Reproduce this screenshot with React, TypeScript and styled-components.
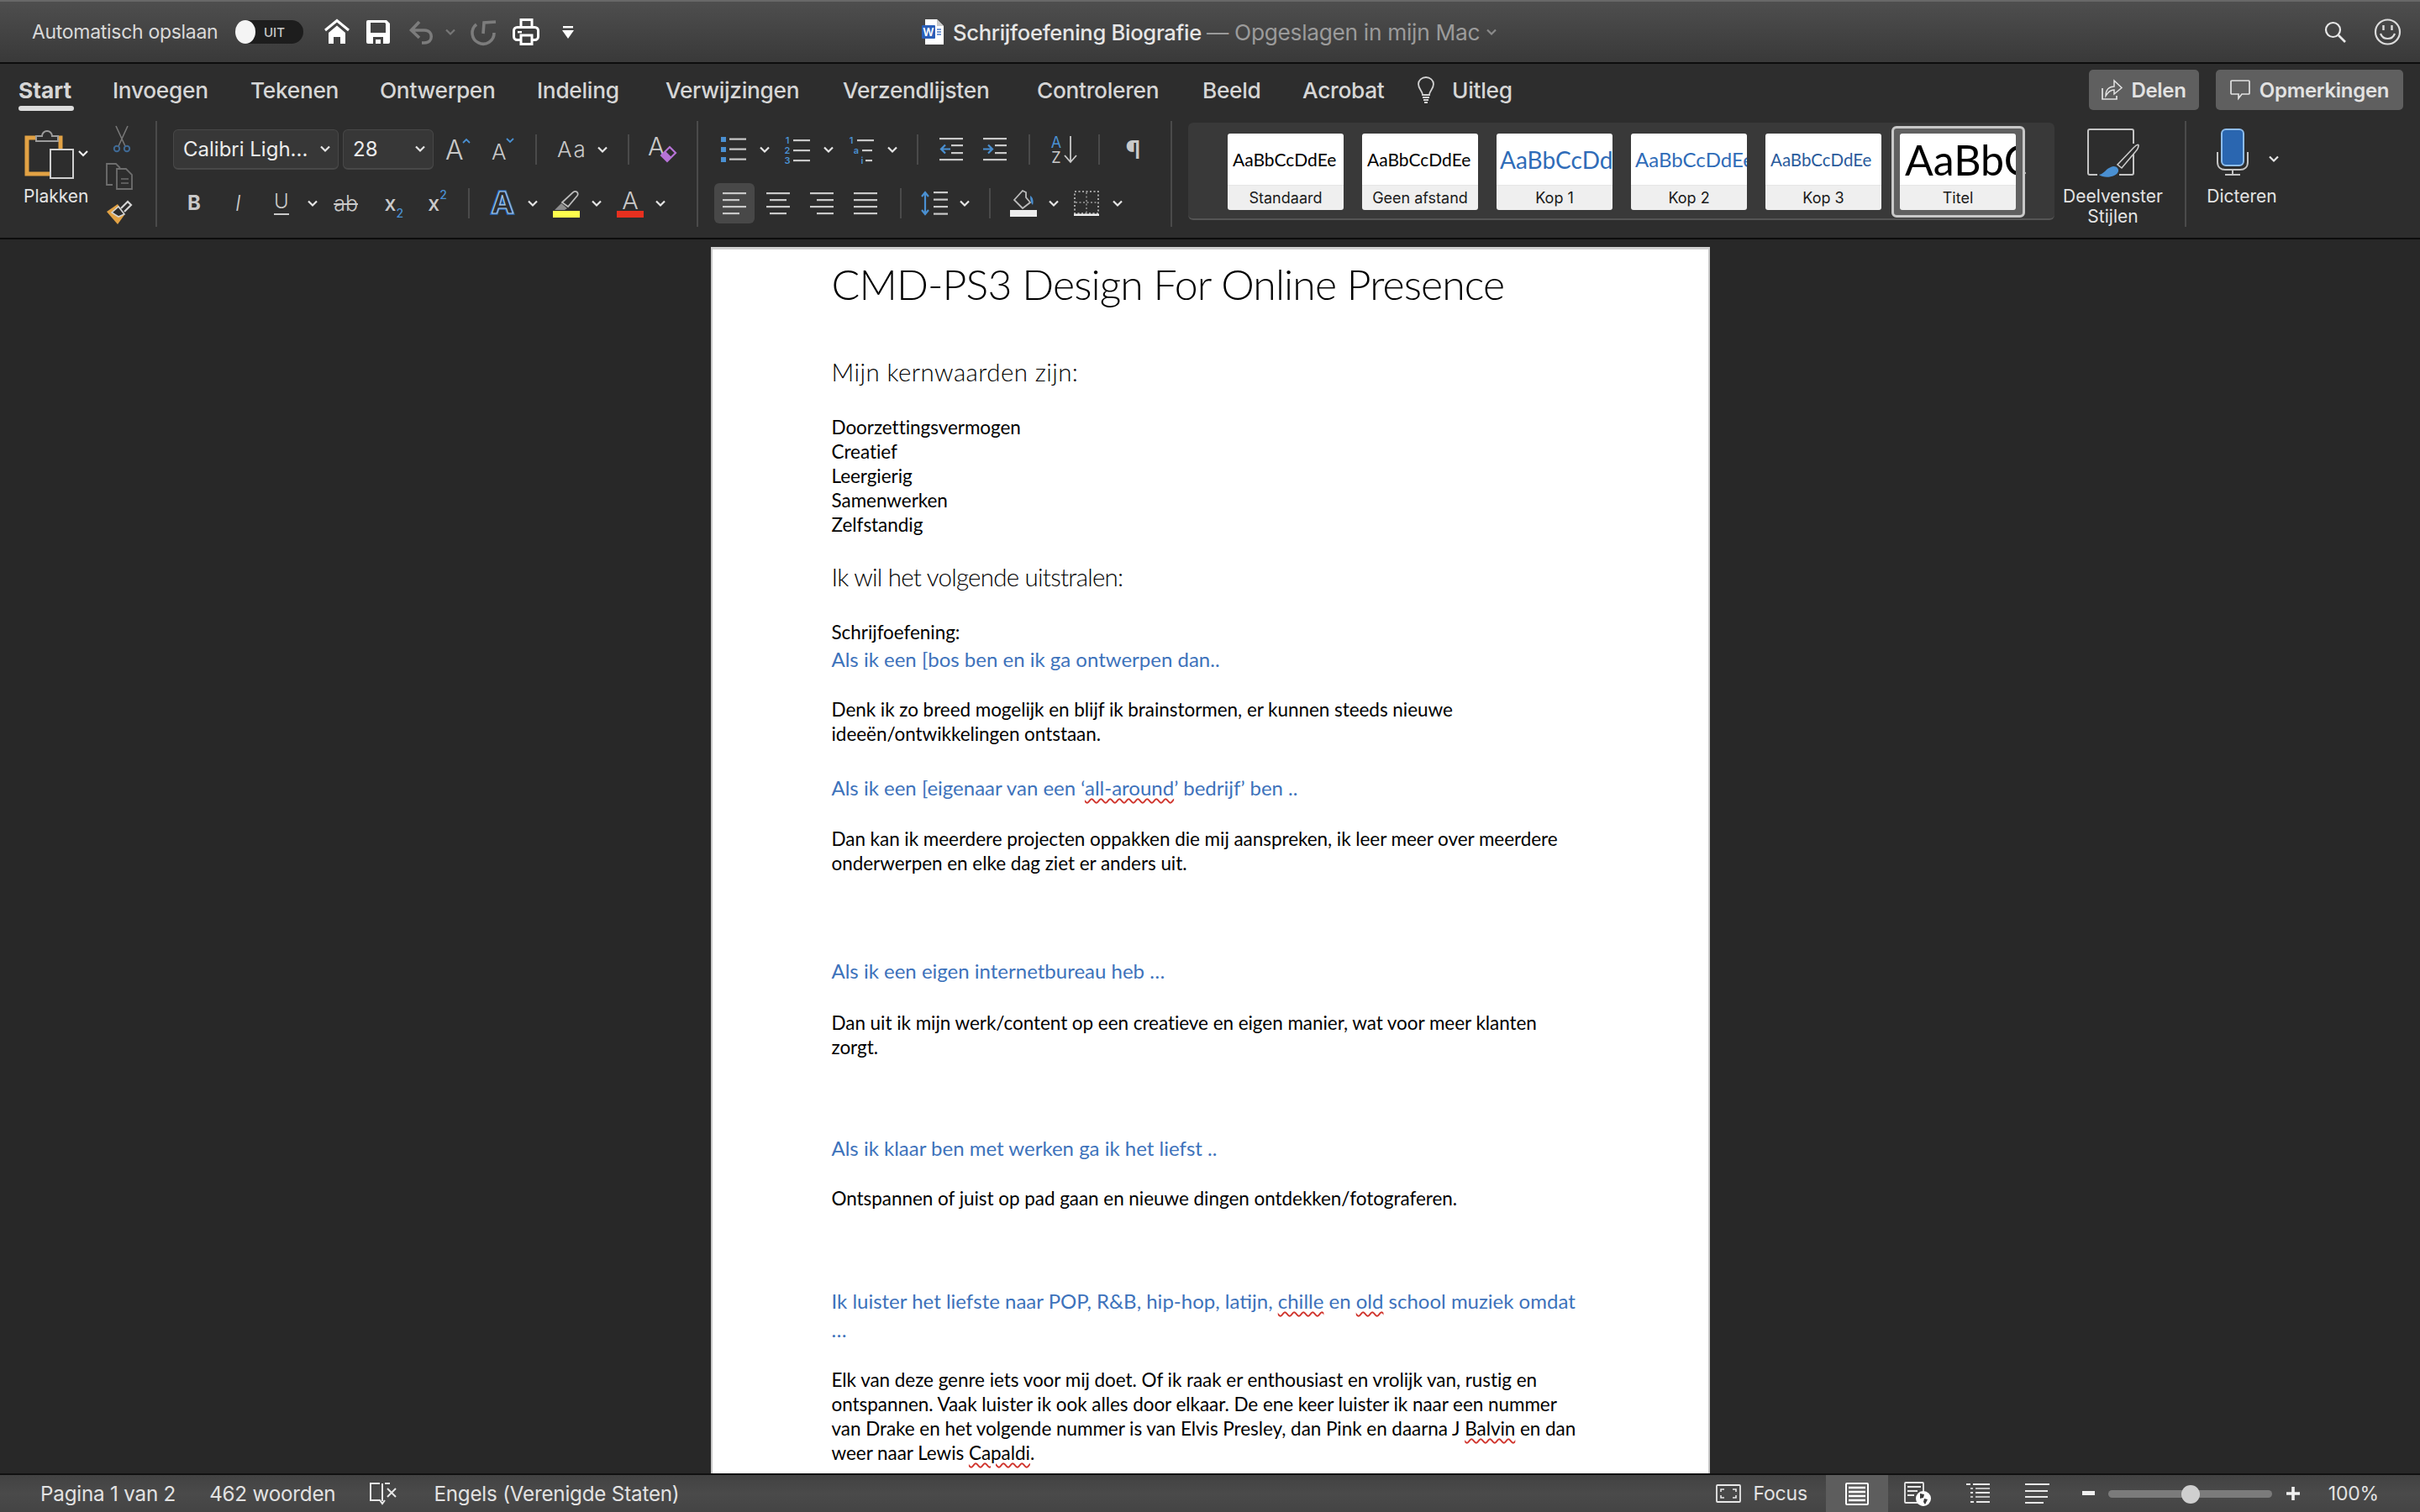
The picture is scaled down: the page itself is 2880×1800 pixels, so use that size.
import React from 'react';
import styled, { createGlobalStyle } from 'styled-components';

const GlobalStyle = createGlobalStyle`
  html, body { margin: 0; padding: 0; background: #282828; }
  body { font-family: Inter, "Noto Sans", sans-serif; }
  * { box-sizing: border-box; }
  svg { overflow: visible; }
`;

const ICON = '#c9c9c9';
const BLUE = '#4a90d2';

const Window = styled.div`
  width: 2880px;
  height: 1800px;
  display: flex;
  flex-direction: column;
  overflow: hidden;
`;

/* title bar */
const TitleBar = styled.div`
  flex: 0 0 76px;
  display: flex;
  align-items: center;
  background: linear-gradient(#4e4e4e, #393939);
  border-top: 2px solid #686868;
  border-bottom: 2px solid #0d0d0d;
`;
const Slot = styled.span<{ $l?: number; $w?: number }>`
  flex: 0 0 auto;
  display: inline-flex;
  align-items: center;
  justify-content: center;
  margin-left: ${(p) => p.$l ?? 0}px;
  ${(p) => (p.$w ? `width: ${p.$w}px;` : '')}
`;
const AutoSave = styled.span`
  margin-left: 38px;
  font-size: 23px;
  letter-spacing: -0.3px;
  color: #d9d9d9;
  white-space: nowrap;
  width: 222px;
`;
const Toggle = styled.span`
  margin-left: 20px;
  width: 81px;
  height: 28px;
  border-radius: 14px;
  background: #1d1d1d;
  display: flex;
  align-items: center;
`;
const Knob = styled.span`
  width: 24px;
  height: 28px;
  border-radius: 50%;
  background: #f4f4f4;
`;
const ToggleText = styled.span`
  margin-left: 10px;
  font-size: 15px;
  font-weight: 500;
  color: #c8c8c8;
`;
const DocName = styled.span`
  margin-left: 11px;
  font-size: 25.6px;
  font-weight: 500;
  letter-spacing: -0.3px;
  color: #e6e6e6;
  white-space: nowrap;
`;
const DocPlace = styled.span`
  margin-left: 6px;
  font-size: 26.3px;
  letter-spacing: -0.3px;
  color: #9b9b9b;
  white-space: nowrap;
`;
const TitleRight = styled.div`
  margin-left: auto;
  margin-right: 22px;
  display: flex;
  align-items: center;
  gap: 33px;
`;

/* ribbon */
const Ribbon = styled.div`
  flex: 0 0 209px;
  background: #2d2d2d;
  border-bottom: 2px solid #0d0d0d;
  display: flex;
  flex-direction: column;
`;
const TabRow = styled.div`
  flex: 0 0 68px;
  display: flex;
  align-items: center;
  padding-left: 22px;
  padding-bottom: 6px;
`;
const Tab = styled.span<{ $w: number; $l?: number; $active?: boolean }>`
  position: relative;
  flex: 0 0 ${(p) => p.$w}px;
  margin-left: ${(p) => p.$l ?? 0}px;
  font-size: 26.3px;
  font-weight: ${(p) => (p.$active ? 700 : 500)};
  letter-spacing: -0.3px;
  color: #d6d6d6;
  white-space: nowrap;
  ${(p) =>
    p.$active &&
    `letter-spacing: 0;
    &::after {
      content: '';
      position: absolute;
      left: 0;
      top: 34px;
      width: 66px;
      height: 6px;
      border-radius: 3px;
      background: #dcdcdc;
    }`}
`;
const TabButtons = styled.div`
  margin-left: auto;
  margin-right: 20px;
  display: flex;
  gap: 20px;
`;
const TabButton = styled.span<{ $w: number }>`
  width: ${(p) => p.$w}px;
  height: 48px;
  border-radius: 5px;
  background: #5f5f5f;
  display: flex;
  align-items: center;
  justify-content: center;
  gap: 11px;
  font-size: 24px;
  font-weight: 600;
  letter-spacing: -0.3px;
  color: #e2e2e2;
`;
const Tools = styled.div`
  flex: 0 0 124px;
  display: flex;
`;
const Divider = styled.span<{ $l?: number }>`
  flex: 0 0 2px;
  margin-left: ${(p) => p.$l ?? 0}px;
  background: #4a4a4a;
`;
const ClipGroup = styled.div`
  flex: 0 0 185px;
  display: flex;
  padding-left: 26px;
`;
const PasteColumn = styled.div`
  flex: 0 0 86px;
  display: flex;
  flex-direction: column;
  align-items: flex-start;
  padding-top: 9px;
`;
const PasteLabel = styled.span`
  margin-top: 6px;
  margin-left: 2px;
  font-size: 21px;
  color: #e4e4e4;
`;
const SmallColumn = styled.div`
  margin-left: 14px;
  display: flex;
  flex-direction: column;
  padding-top: 6px;
  gap: 12px;
`;
const ToolGroup = styled.div<{ $w: number }>`
  flex: 0 0 ${(p) => p.$w}px;
  display: flex;
  flex-direction: column;
  padding-top: 10px;
  gap: 16px;
`;
const ToolRow = styled.div`
  height: 48px;
  display: flex;
  align-items: center;
`;
const Select = styled.span<{ $l: number; $w: number }>`
  margin-left: ${(p) => p.$l}px;
  width: ${(p) => p.$w}px;
  height: 48px;
  border: 1px solid #484848;
  border-bottom-width: 2px;
  border-radius: 6px;
  background: #373737;
  display: flex;
  align-items: center;
  justify-content: space-between;
  padding: 0 9px 0 11px;
  font-size: 24px;
  color: #ececec;
  white-space: nowrap;
`;
const RowSep = styled.span<{ $l: number }>`
  margin-left: ${(p) => p.$l}px;
  flex: 0 0 2px;
  height: 36px;
  background: #4a4a4a;
`;
const Glyph = styled.span<{ $l: number; $w: number; $size: number; $weight?: number; $italic?: boolean; $line?: boolean; $under?: boolean; $track?: number }>`
  flex: 0 0 ${(p) => p.$w}px;
  margin-left: ${(p) => p.$l}px;
  text-align: center;
  font-size: ${(p) => p.$size}px;
  font-weight: ${(p) => p.$weight ?? 400};
  font-style: ${(p) => (p.$italic ? 'italic' : 'normal')};
  letter-spacing: ${(p) => p.$track ?? 0}px;
  ${(p) => (p.$line ? 'text-decoration: line-through; text-decoration-thickness: 2px;' : '')}
  ${(p) => (p.$under ? `border-bottom: 2px solid ${ICON}; padding-bottom: 2px;` : '')}
  color: ${ICON};
  line-height: 1;
  white-space: nowrap;
`;
const Sup = styled.sup`
  font-size: 14px;
  color: ${BLUE};
  vertical-align: baseline;
  position: relative;
  top: -14px;
`;
const Sub = styled.sub`
  font-size: 14px;
  color: ${BLUE};
  vertical-align: baseline;
  position: relative;
  top: 8px;
`;
const SelectedTool = styled.span<{ $l: number }>`
  margin-left: ${(p) => p.$l}px;
  width: 48px;
  height: 48px;
  border-radius: 6px;
  background: #484848;
  display: flex;
  align-items: center;
  justify-content: center;
`;

/* style gallery */
const Gallery = styled.div`
  flex: 0 0 1031px;
  margin: 2px 0 6px 19px;
  height: 116px;
  border-radius: 6px;
  background: #393939;
  border-bottom: 2px solid #555;
  display: flex;
  align-items: flex-start;
  padding: 13px 0 0 47px;
  gap: 22px;
`;
const StyleCard = styled.div<{ $selected?: boolean }>`
  position: relative;
  flex: 0 0 138px;
  width: 138px;
  min-width: 0;
  height: 91px;
  border-radius: 3px;
  display: flex;
  flex-direction: column;
  ${(p) =>
    p.$selected &&
    `&::before {
      content: '';
      position: absolute;
      inset: -9px -11px -9px -10px;
      border: 3px solid #c8c8c8;
      border-radius: 6px;
      background: #606060;
      z-index: 0;
    }`}
`;
const Sample = styled.div<{ $size: number; $color: string; $pad: number }>`
  position: relative;
  z-index: 1;
  height: 61px;
  padding-left: ${(p) => p.$pad}px;
  border-radius: 3px 3px 0 0;
  background: #fff;
  overflow: hidden;
  display: flex;
  align-items: center;
  font-family: Lato, sans-serif;
  font-size: ${(p) => p.$size}px;
  color: ${(p) => p.$color};
  white-space: nowrap;
`;
const SampleLabel = styled.div`
  position: relative;
  z-index: 1;
  height: 30px;
  background: #efefef;
  border-radius: 0 0 3px 3px;
  border-top: 1px solid #e6e6e6;
  text-align: center;
  font-size: 18px;
  line-height: 30px;
  color: #1a1a1a;
`;
const GalleryArrow = styled.span`
  margin: 38px 0 0 -17px;
`;
const PaneColumn = styled.div`
  flex: 0 0 139px;
  display: flex;
  flex-direction: column;
  align-items: center;
  padding-top: 9px;
`;
const DictateColumn = styled.div`
  flex: 0 0 132px;
  display: flex;
  flex-direction: column;
  align-items: center;
  padding-top: 9px;
`;
const BigLabel = styled.span`
  margin-top: 8px;
  text-align: center;
  font-size: 21px;
  line-height: 24px;
  color: #e4e4e4;
`;
const DictateIcon = styled.div`
  height: 61px;
  display: flex;
  align-items: flex-start;
  gap: 24px;
  padding-left: 14px;
`;
const DictateChevron = styled.span`
  margin-top: 25px;
`;

/* document */
const Canvas = styled.div`
  flex: 1;
  background: #282828;
  display: flex;
  justify-content: center;
  overflow: hidden;
  padding-top: 9px;
`;
const Page = styled.div`
  width: 1189px;
  height: 1600px;
  background: #fff;
  border-top: 3px solid #d0d0d0;
  border-left: 2px solid #c8c8c8;
  border-right: 2px solid #c8c8c8;
  padding: 9px 0 0 142px;
  font-family: Lato, "Noto Sans", sans-serif;
  color: #000;
`;
const DocTitle = styled.div`
  height: 64px;
  line-height: 64px;
  font-size: 50px;
  font-weight: 300;
  letter-spacing: -0.9px;
  white-space: nowrap;
`;
const Heading = styled.div<{ $mt: number; $tight?: boolean }>`
  margin-top: ${(p) => p.$mt}px;
  height: 38px;
  line-height: 38px;
  font-size: 29.5px;
  font-weight: 300;
  letter-spacing: ${(p) => (p.$tight ? '-0.75px' : '0.4px')};
  white-space: nowrap;
`;
const Body = styled.div<{ $mt?: number }>`
  margin-top: ${(p) => p.$mt ?? 0}px;
  line-height: 29px;
  font-size: 22.5px;
  letter-spacing: -0.05px;
  white-space: nowrap;
`;
const Prompt = styled.div<{ $mt?: number }>`
  margin-top: ${(p) => p.$mt ?? 0}px;
  height: 34px;
  line-height: 34px;
  font-size: 24px;
  color: #3d72bb;
  white-space: nowrap;
`;
const Misspelled = styled.span`
  text-decoration: underline wavy #d0342c;
  text-decoration-thickness: 1.5px;
  text-underline-offset: 3px;
`;

/* status bar */
const StatusBar = styled.div`
  flex: 0 0 46px;
  display: flex;
  align-items: center;
  background: linear-gradient(#424242, #4a4a4a 50%, #444);
  border-top: 2px solid #111;
  font-size: 24.2px;
  letter-spacing: -0.2px;
  color: #e2e2e2;
`;
const StatusText = styled.span<{ $l: number }>`
  margin-left: ${(p) => p.$l}px;
  white-space: nowrap;
`;
const StatusRight = styled.div`
  margin-left: auto;
  height: 100%;
  display: flex;
  align-items: center;
  font-size: 23px;
`;
const ViewButton = styled.span<{ $l: number; $on?: boolean }>`
  margin-left: ${(p) => p.$l}px;
  height: 100%;
  padding: 0 ${(p) => (p.$on ? 23 : 0)}px;
  background: ${(p) => (p.$on ? '#5d5d5d' : 'transparent')};
  display: flex;
  align-items: center;
`;
const ZoomTrack = styled.span`
  position: relative;
  margin-left: 16px;
  width: 195px;
  height: 9px;
  border-radius: 5px;
  background: #7b7b7b;
`;
const ZoomKnob = styled.span`
  position: absolute;
  left: 87px;
  top: -6px;
  width: 22px;
  height: 22px;
  border-radius: 50%;
  background: #cfcfcf;
`;

/* icons */
const Chev = ({ c = '#e6e6e6' }: { c?: string }) => (
  <svg width="12" height="9" viewBox="0 0 12 9"><path d="M1 1.5l5 5 5-5" fill="none" stroke={c} strokeWidth="2.2" /></svg>
);
const Lines = ({ rows, c = ICON, w = 28 }: { rows: [number, number][]; c?: string; w?: number }) => (
  <svg width={w} height="26" viewBox={`0 0 ${w} 26`}>
    {rows.map(([x, l], i) => (
      <rect key={i} x={x} y={i * 8} width={l} height="2.2" fill={c} />
    ))}
  </svg>
);
const Home = () => (
  <svg width="32" height="30" viewBox="0 0 32 30">
    <path d="M2 13L16 1.5 30 13" fill="none" stroke="#fff" strokeWidth="3" />
    <path d="M6 16L16 7.5 26 16v13h-6v-8h-8v8H6z" fill="#fff" />
  </svg>
);
const Save = () => (
  <svg width="28" height="28" viewBox="0 0 28 28">
    <path d="M2 0h22l4 4v22a2 2 0 01-2 2H2a2 2 0 01-2-2V2a2 2 0 012-2z" fill="#fff" />
    <path d="M5 3h17l1 1v11H5z" fill="#434343" />
    <path d="M8 28v-8h12v8h-3v-5h-6v5z" fill="#434343" />
  </svg>
);
const Undo = () => (
  <svg width="30" height="28" viewBox="0 0 30 28">
    <path d="M12 2L2.5 12 12 21M3 12h15c11 0 11 15 0 15h-3" fill="none" stroke="#7c7c7c" strokeWidth="3.6" />
  </svg>
);
const Redo = () => (
  <svg width="30" height="30" viewBox="0 0 30 30">
    <path d="M7 6a13 13 0 1 0 21 10" fill="none" stroke="#7c7c7c" strokeWidth="3.6" />
    <path d="M30 3L16 4l-1 13" fill="none" stroke="#7c7c7c" strokeWidth="3.6" />
  </svg>
);
const Printer = () => (
  <svg width="32" height="32" viewBox="0 0 32 32">
    <rect x="10" y="1.5" width="13" height="10" fill="none" stroke="#fff" strokeWidth="3" />
    <rect x="1.5" y="10.5" width="29" height="15" rx="4" fill="#3e3e3e" stroke="#fff" strokeWidth="3" />
    <rect x="6" y="15" width="5" height="2.4" fill="#fff" />
    <rect x="10" y="20" width="13" height="10.5" fill="#3e3e3e" stroke="#fff" strokeWidth="3" />
  </svg>
);
const QuickMenu = () => (
  <svg width="14" height="15" viewBox="0 0 14 15">
    <rect x="1" y="0" width="12" height="2.4" fill="#fff" />
    <path d="M0 5h14l-7 10z" fill="#fff" />
  </svg>
);
const WordDoc = () => (
  <svg width="26" height="30" viewBox="0 0 26 30">
    <path d="M4 0h14l8 8v22H4z" fill="#fff" />
    <path d="M18 0v8h8z" fill="#c8c8c8" />
    <rect x="0" y="7" width="16" height="16" rx="1" fill="#2b5fb8" />
    <text x="8" y="20" textAnchor="middle" fontFamily="Inter" fontSize="13" fontWeight="600" fill="#fff">W</text>
    <path d="M18 12h5M18 15h5M18 18h5" stroke="#4a7ac8" strokeWidth="1.4" />
  </svg>
);
const Search = () => (
  <svg width="26" height="26" viewBox="0 0 26 26">
    <circle cx="10.5" cy="10.5" r="8.5" fill="none" stroke="#e8e8e8" strokeWidth="2.2" />
    <path d="M17 17l8 8" stroke="#e8e8e8" strokeWidth="2.6" />
  </svg>
);
const Smile = () => (
  <svg width="33" height="32" viewBox="0 0 33 32">
    <circle cx="16.5" cy="16" r="14.5" fill="none" stroke="#dcdcdc" strokeWidth="2.2" />
    <path d="M11.5 8v6M21.5 8v6" stroke="#dcdcdc" strokeWidth="2.4" />
    <path d="M8 18c3 8 14 8 17 0" fill="none" stroke="#dcdcdc" strokeWidth="2.2" />
  </svg>
);
const Bulb = () => (
  <svg width="22" height="33" viewBox="0 0 22 33">
    <path d="M7 22c0-5-5-7-5-13a9 8 0 0118 0c0 6-5 8-5 13z" fill="none" stroke="#d2d2d2" strokeWidth="1.8" />
    <path d="M7 25h8M8 28h6M9 31h4" stroke="#d2d2d2" strokeWidth="2" />
  </svg>
);
const Share = () => (
  <svg width="24" height="24" viewBox="0 0 24 24">
    <path d="M1 10v13h17v-4" fill="none" stroke="#e2e2e2" strokeWidth="1.7" />
    <path d="M5 19c0-7 4-11 10-11V1l9 8.500-9 7.500V12c-4 0-7 2-10 7z" fill="none" stroke="#e2e2e2" strokeWidth="1.5" />
  </svg>
);
const Comment = () => (
  <svg width="24" height="24" viewBox="0 0 24 24">
    <path d="M2 1h20a1 1 0 011 1v14a1 1 0 01-1 1h-8l-4 5v-5H2a1 1 0 01-1-1V2a1 1 0 011-1z" fill="none" stroke="#e2e2e2" strokeWidth="1.7" />
  </svg>
);
const Paste = () => (
  <svg width="80" height="62" viewBox="0 0 80 62">
    <path d="M22 11H6v43h28" fill="none" stroke="#e2a244" strokeWidth="5" />
    <path d="M38 11h8v14" fill="none" stroke="#e2a244" strokeWidth="5" />
    <path d="M17 15V9h7a6 6 0 0112 0h7v6z" fill="#2d2d2d" stroke="#9c9c9c" strokeWidth="2" />
    <rect x="34" y="25" width="27" height="34" fill="#2d2d2d" stroke="#cfcfcf" strokeWidth="2" />
    <path d="M68 27l5 5 5-5" fill="none" stroke="#eee" strokeWidth="2.2" />
  </svg>
);
const Scissors = () => (
  <svg width="20" height="32" viewBox="0 0 20 32">
    <path d="M3 0l11 24M17 0L6 24" stroke="#777" strokeWidth="1.6" />
    <circle cx="4" cy="27" r="3.2" fill="none" stroke="#3f6a96" strokeWidth="2" />
    <circle cx="16" cy="27" r="3.2" fill="none" stroke="#3f6a96" strokeWidth="2" />
  </svg>
);
const Copy = () => (
  <svg width="32" height="32" viewBox="0 0 32 32">
    <path d="M8 26H1V1h11l5 5" fill="none" stroke="#6e6e6e" strokeWidth="1.8" />
    <path d="M13 7h11l7 7v17H13z" fill="none" stroke="#6e6e6e" strokeWidth="1.8" />
    <path d="M18 19h9M18 24h9" stroke="#6e6e6e" strokeWidth="1.6" />
  </svg>
);
const Brush = () => (
  <svg width="32" height="30" viewBox="0 0 32 30">
    <path d="M1 14L14 5l8 13-8 11z" fill="#e2a244" />
    <path d="M7 15l8-7 7 9-7 3z" fill="#2d2d2d" stroke="#d4d4d4" strokeWidth="1.6" />
    <path d="M18 10l8-8 4 4-8 8" fill="none" stroke="#d4d4d4" strokeWidth="2.2" />
  </svg>
);
const GrowA = ({ up }: { up: boolean }) => (
  <svg width={up ? 30 : 27} height="30" viewBox={`0 0 ${up ? 30 : 27} 30`}>
    <text x="0" y="27" fontFamily="Inter" fontSize={up ? 32 : 26} fontWeight="300" fill={ICON}>A</text>
    <path d={up ? 'M21 7l4-4 4 4' : 'M18 2l4 4 4-4'} fill="none" stroke={BLUE} strokeWidth="1.8" />
  </svg>
);
const ClearFormat = () => (
  <svg width="32" height="32" viewBox="0 0 32 32">
    <text x="-1" y="23" fontFamily="Inter" fontSize="30" fontWeight="300" fill={ICON}>A</text>
    <path d="M25 13l7 7-10 10-7-7z" fill="#2d2d2d" stroke="#b673d6" strokeWidth="2.2" />
    <path d="M20 18l7 7-5 5-7-7z" fill="#b673d6" />
  </svg>
);
const OutlineA = () => (
  <svg width="32" height="30" viewBox="0 0 32 30">
    <text x="16" y="27" textAnchor="middle" fontFamily="Inter" fontSize="36" fontWeight="700" fill="#2d2d2d" stroke="#2a68b4" strokeWidth="3.5">A</text>
    <text x="16" y="27" textAnchor="middle" fontFamily="Inter" fontSize="36" fontWeight="700" fill="#2d2d2d" stroke="#a3c9ee" strokeWidth="1.2">A</text>
  </svg>
);
const Highlighter = () => (
  <svg width="32" height="33" viewBox="0 0 32 33">
    <path d="M11 15L24 3a3 3 0 015 4L18 20z" fill="none" stroke="#bcbcbc" strokeWidth="1.8" />
    <path d="M2 24l8-8 7 6-3 2z" fill="#8c8c8c" />
    <rect x="0" y="25" width="32" height="8" fill="#ffff4d" />
  </svg>
);
const FontColor = () => (
  <svg width="32" height="33" viewBox="0 0 32 33">
    <text x="16" y="23" textAnchor="middle" fontFamily="Inter" fontSize="29" fontWeight="300" fill={ICON}>A</text>
    <rect x="0" y="25" width="32" height="8" fill="#e8301f" />
  </svg>
);
const BulletList = () => (
  <svg width="30" height="30" viewBox="0 0 30 30">
    {[0, 12, 24].map((y) => (
      <g key={y}>
        <rect x="0" y={y} width="6" height="6" fill={BLUE} />
        <rect x="10" y={y + 1.5} width="20" height="2.2" fill={ICON} />
      </g>
    ))}
  </svg>
);
const NumberList = () => (
  <svg width="30" height="30" viewBox="0 0 30 30">
    {['1', '2', '3'].map((n, i) => (
      <g key={n}>
        <text x="3" y={8 + i * 12} textAnchor="middle" fontFamily="Inter" fontSize="11" fontWeight="600" fill={BLUE}>{n}</text>
        <rect x="10" y={3 + i * 12} width="20" height="2.2" fill={ICON} />
      </g>
    ))}
  </svg>
);
const MultiList = () => (
  <svg width="30" height="30" viewBox="0 0 30 30">
    <text x="3" y="8" textAnchor="middle" fontFamily="Inter" fontSize="11" fontWeight="600" fill={BLUE}>1</text>
    <rect x="10" y="3" width="20" height="2.2" fill={ICON} />
    <text x="9" y="20" textAnchor="middle" fontFamily="Inter" fontSize="11" fontWeight="600" fill={BLUE}>a</text>
    <rect x="16" y="15" width="12" height="2.2" fill={ICON} />
    <text x="16" y="32" textAnchor="middle" fontFamily="Inter" fontSize="11" fontWeight="600" fill={BLUE}>i</text>
    <rect x="20" y="27" width="8" height="2.2" fill={ICON} />
  </svg>
);
const Indent = ({ out }: { out: boolean }) => (
  <svg width="28" height="28" viewBox="0 0 28 28">
    <rect x="0" y="0" width="28" height="2.2" fill={ICON} />
    <rect x="14" y="8" width="14" height="2.2" fill={ICON} />
    <rect x="14" y="17" width="14" height="2.2" fill={ICON} />
    <rect x="0" y="25" width="28" height="2.2" fill={ICON} />
    <path d={out ? 'M13 13.5H2m5-5l-5 5 5 5' : 'M0 13.5h11m-5-5l5 5-5 5'} fill="none" stroke={BLUE} strokeWidth="2.2" />
  </svg>
);
const SortAZ = () => (
  <svg width="32" height="34" viewBox="0 0 32 34">
    <text x="7" y="15" textAnchor="middle" fontFamily="Inter" fontSize="18" fontWeight="400" fill={BLUE}>A</text>
    <text x="7" y="33" textAnchor="middle" fontFamily="Inter" fontSize="18" fontWeight="400" fill={ICON}>Z</text>
    <path d="M24 1v31m-7-8l7 8 7-8" fill="none" stroke={ICON} strokeWidth="1.8" />
  </svg>
);
const LineSpacing = () => (
  <svg width="32" height="28" viewBox="0 0 32 28">
    <path d="M5 1v26M1 6l4-5 4 5M1 22l4 5 4-5" fill="none" stroke={BLUE} strokeWidth="2.2" />
    {[0, 8.5, 17, 25.5].map((y) => (
      <rect key={y} x="15" y={y} width="17" height="2.2" fill={ICON} />
    ))}
  </svg>
);
const Fill = () => (
  <svg width="32" height="32" viewBox="0 0 32 32">
    <path d="M5 12L15 1l4 2v6l5 6-9 7z" fill="none" stroke="#bcbcbc" strokeWidth="1.8" />
    <path d="M24 7c4 2 4 8 3 11-2-2-3-6-3-11z" fill={BLUE} />
    <rect x="0" y="24" width="32" height="8" fill="#ededed" />
  </svg>
);
const Borders = () => (
  <svg width="30" height="30" viewBox="0 0 30 30">
    <rect x="1" y="1" width="28" height="26" fill="none" stroke="#c4c4c4" strokeWidth="1.6" strokeDasharray="2 2.5" />
    <path d="M15 2v24M2 14h26" stroke="#9c9c9c" strokeWidth="1.4" strokeDasharray="2 2.5" />
    <rect x="0" y="27.5" width="30" height="2.5" fill="#eee" />
  </svg>
);
const ChevRight = () => (
  <svg width="8" height="14" viewBox="0 0 8 14"><path d="M1 1l5 6-5 6" fill="none" stroke="#ddd" strokeWidth="1.8" /></svg>
);
const PaneBrush = () => (
  <svg width="62" height="61" viewBox="0 0 62 61">
    <path d="M12 55H3a2 2 0 01-2-2V3a2 2 0 012-2h50a2 2 0 012 2v15M55 30v23a2 2 0 01-2 2H38" fill="none" stroke="#c4c4c4" strokeWidth="2" />
    <path d="M36 43l19-20c3-3 6-5 6-3 0 3-2 6-4 8L41 47z" fill="#2d2d2d" stroke="#cccccc" strokeWidth="1.6" />
    <path d="M14 55c6-1 8-7 14-9 5-3 10 1 9 5-2 7-17 9-23 4z" fill={BLUE} />
  </svg>
);
const Mic = () => (
  <svg width="38" height="56" viewBox="0 0 38 56">
    <rect x="6" y="1" width="26" height="43" rx="5" fill="#2a66b0" stroke="#8dbcec" strokeWidth="2" />
    <path d="M1 28v12c0 6 4 9 9 9h18c5 0 9-3 9-9V28" fill="none" stroke="#c4c4c4" strokeWidth="2" />
    <path d="M19 49v6M10 55h18" stroke="#c4c4c4" strokeWidth="2" />
  </svg>
);
const NoCheck = () => (
  <svg width="31" height="27" viewBox="0 0 31 27">
    <path d="M12 1H1v20h11l3 4 3-4M15 1v21M18 1h6" fill="none" stroke="#e8e8e8" strokeWidth="2" />
    <path d="M21 7l10 10M31 7L21 17" stroke="#e8e8e8" strokeWidth="2" />
  </svg>
);
const FocusIcon = () => (
  <svg width="30" height="22" viewBox="0 0 30 22">
    <rect x="1" y="1" width="28" height="20" rx="1" fill="none" stroke="#e8e8e8" strokeWidth="1.8" />
    <path d="M6 9V6h4M20 6h4v3M24 13v3h-4M10 16H6v-3" fill="none" stroke="#e8e8e8" strokeWidth="1.6" />
  </svg>
);
const PrintView = () => (
  <svg width="28" height="27" viewBox="0 0 28 27">
    <rect x="1" y="1" width="26" height="25" rx="1" fill="none" stroke="#fff" strokeWidth="2" />
    <path d="M4 6h20M4 11h20M4 16h20M4 21h20" stroke="#fff" strokeWidth="2.4" />
  </svg>
);
const WebView = () => (
  <svg width="32" height="29" viewBox="0 0 32 29">
    <rect x="1" y="1" width="22" height="24" rx="1" fill="none" stroke="#e8e8e8" strokeWidth="1.8" />
    <path d="M4 6h16M4 11h12M4 16h8" stroke="#e8e8e8" strokeWidth="2" />
    <circle cx="23" cy="20" r="9" fill="#fff" />
    <path d="M19 14l5 1-1 4-4 1zM24 20l4 1-3 6-2-3z" fill="#3a3a3a" />
  </svg>
);
const OutlineView = () => (
  <svg width="28" height="24" viewBox="0 0 28 24">
    <path d="M0 1h5M8 1h20M5 11h3M11 11h17M5 22h4M12 22h16" stroke="#e8e8e8" strokeWidth="2.2" />
    <path d="M5 6h3M11 6h17M5 16h3M11 16h17" stroke="#e8e8e8" strokeWidth="1.6" />
  </svg>
);
const DraftView = () => (
  <svg width="29" height="24" viewBox="0 0 29 24">
    <path d="M0 1h29M0 9h27M0 16h27M0 23h22" stroke="#e8e8e8" strokeWidth="2.2" />
  </svg>
);
const Minus = () => <svg width="15" height="6" viewBox="0 0 15 6"><rect width="15" height="5" fill="#f0f0f0" /></svg>;
const Plus = () => (
  <svg width="16" height="16" viewBox="0 0 16 16"><path d="M8 0v16M0 8h16" stroke="#f0f0f0" strokeWidth="3.6" /></svg>
);

const styleCards = [
  { name: 'Standaard', size: 21, color: '#000', pad: 6 },
  { name: 'Geen afstand', size: 21, color: '#000', pad: 6 },
  { name: 'Kop 1', size: 28, color: '#2f6cb8', pad: 4 },
  { name: 'Kop 2', size: 24, color: '#2f6cb8', pad: 5 },
  { name: 'Kop 3', size: 20.5, color: '#2a5b9c', pad: 6 },
  { name: 'Titel', size: 50, color: '#000', pad: 6 },
];

export default function App() {
  return (
    <Window>
      <GlobalStyle />
      <TitleBar>
        <AutoSave>Automatisch opslaan</AutoSave>
        <Toggle>
          <Knob />
          <ToggleText>UIT</ToggleText>
        </Toggle>
        <Slot $l={24}><Home /></Slot>
        <Slot $l={19}><Save /></Slot>
        <Slot $l={23}><Undo /></Slot>
        <Slot $l={13}><Chev c="#777" /></Slot>
        <Slot $l={18}><Redo /></Slot>
        <Slot $l={20}><Printer /></Slot>
        <Slot $l={27}><QuickMenu /></Slot>
        <Slot $l={414}><WordDoc /></Slot>
        <DocName>Schrijfoefening Biografie</DocName>
        <DocPlace>— Opgeslagen in mijn Mac</DocPlace>
        <Slot $l={8}><Chev c="#8a8a8a" /></Slot>
        <TitleRight>
          <Search />
          <Smile />
        </TitleRight>
      </TitleBar>

      <Ribbon>
        <TabRow>
          <Tab $w={112} $active>Start</Tab>
          <Tab $w={164}>Invoegen</Tab>
          <Tab $w={154}>Tekenen</Tab>
          <Tab $w={187}>Ontwerpen</Tab>
          <Tab $w={153}>Indeling</Tab>
          <Tab $w={211}>Verwijzingen</Tab>
          <Tab $w={231}>Verzendlijsten</Tab>
          <Tab $w={197}>Controleren</Tab>
          <Tab $w={119}>Beeld</Tab>
          <Tab $w={136}>Acrobat</Tab>
          <Slot><Bulb /></Slot>
          <Tab $w={90} $l={20}>Uitleg</Tab>
          <TabButtons>
            <TabButton $w={131}><Share />Delen</TabButton>
            <TabButton $w={223}><Comment />Opmerkingen</TabButton>
          </TabButtons>
        </TabRow>
        <Tools>
          <ClipGroup>
            <PasteColumn>
              <Paste />
              <PasteLabel>Plakken</PasteLabel>
            </PasteColumn>
            <SmallColumn>
              <Slot $l={6}><Scissors /></Slot>
              <Slot><Copy /></Slot>
              <Slot><Brush /></Slot>
            </SmallColumn>
          </ClipGroup>
          <Divider />
          <ToolGroup $w={642}>
            <ToolRow>
              <Select $l={19} $w={197}>Calibri Ligh...<Chev /></Select>
              <Select $l={5} $w={108}>28<Chev /></Select>
              <Slot $l={14}><GrowA up /></Slot>
              <Slot $l={25}><GrowA up={false} /></Slot>
              <RowSep $l={25} />
              <Glyph $l={24} $w={32} $size={26} $weight={300} $track={2}>Aa</Glyph>
              <Slot $l={12}><Chev /></Slot>
              <RowSep $l={24} />
              <Slot $l={23}><ClearFormat /></Slot>
            </ToolRow>
            <ToolRow>
              <Glyph $l={36} $w={15} $size={24} $weight={700}>B</Glyph>
              <Glyph $l={39} $w={11} $size={25} $weight={300} $italic>I</Glyph>
              <Glyph $l={37} $w={17} $size={24} $weight={300} $under>U</Glyph>
              <Slot $l={22}><Chev /></Slot>
              <Glyph $l={19} $w={30} $size={25} $weight={300} $line>ab</Glyph>
              <Glyph $l={31} $w={22} $size={25} $weight={500}>x<Sub>2</Sub></Glyph>
              <Glyph $l={29} $w={23} $size={25} $weight={500}>x<Sup>2</Sup></Glyph>
              <RowSep $l={25} />
              <Slot $l={23}><OutlineA /></Slot>
              <Slot $l={14}><Chev /></Slot>
              <Slot $l={18}><Highlighter /></Slot>
              <Slot $l={14}><Chev /></Slot>
              <Slot $l={18}><FontColor /></Slot>
              <Slot $l={14}><Chev /></Slot>
            </ToolRow>
          </ToolGroup>
          <Divider />
          <ToolGroup $w={562}>
            <ToolRow>
              <Slot $l={27}><BulletList /></Slot>
              <Slot $l={16}><Chev /></Slot>
              <Slot $l={18}><NumberList /></Slot>
              <Slot $l={16}><Chev /></Slot>
              <Slot $l={18}><MultiList /></Slot>
              <Slot $l={16}><Chev /></Slot>
              <RowSep $l={23} />
              <Slot $l={25}><Indent out /></Slot>
              <Slot $l={24}><Indent out={false} /></Slot>
              <RowSep $l={26} />
              <Slot $l={24}><SortAZ /></Slot>
              <RowSep $l={25} />
              <Glyph $l={29} $w={21} $size={30} $weight={600}>¶</Glyph>
            </ToolRow>
            <ToolRow>
              <SelectedTool $l={19}><Lines rows={[[0, 28], [0, 20], [0, 28], [0, 20]]} /></SelectedTool>
              <Slot $l={14}><Lines rows={[[0, 28], [4, 20], [0, 28], [4, 20]]} /></Slot>
              <Slot $l={24}><Lines rows={[[0, 28], [8, 20], [0, 28], [8, 20]]} /></Slot>
              <Slot $l={24}><Lines rows={[[0, 28], [0, 28], [0, 28], [0, 28]]} /></Slot>
              <RowSep $l={27} />
              <Slot $l={23}><LineSpacing /></Slot>
              <Slot $l={14}><Chev /></Slot>
              <RowSep $l={23} />
              <Slot $l={23}><Fill /></Slot>
              <Slot $l={14}><Chev /></Slot>
              <Slot $l={18}><Borders /></Slot>
              <Slot $l={16}><Chev /></Slot>
            </ToolRow>
          </ToolGroup>
          <Divider />
          <Gallery>
            {styleCards.map((c) => (
              <StyleCard key={c.name} $selected={c.name === 'Titel'}>
                <Sample $size={c.size} $color={c.color} $pad={c.pad}>AaBbCcDdEe</Sample>
                <SampleLabel>{c.name}</SampleLabel>
              </StyleCard>
            ))}
            <GalleryArrow><ChevRight /></GalleryArrow>
          </Gallery>
          <PaneColumn>
            <PaneBrush />
            <BigLabel>Deelvenster<br />Stijlen</BigLabel>
          </PaneColumn>
          <Divider $l={16} />
          <DictateColumn>
            <DictateIcon>
              <Mic />
              <DictateChevron><Chev /></DictateChevron>
            </DictateIcon>
            <BigLabel>Dicteren</BigLabel>
          </DictateColumn>
        </Tools>
      </Ribbon>

      <Canvas>
        <Page>
          <DocTitle>CMD-PS3 Design For Online Presence</DocTitle>
          <Heading $mt={54}>Mijn kernwaarden zijn:</Heading>
          <Body $mt={32}>Doorzettingsvermogen</Body>
          <Body>Creatief</Body>
          <Body>Leergierig</Body>
          <Body>Samenwerken</Body>
          <Body>Zelfstandig</Body>
          <Heading $mt={29} $tight>Ik wil het volgende uitstralen:</Heading>
          <Body $mt={32}>Schrijfoefening:</Body>
          <Prompt $mt={1}>Als ik een [bos ben en ik ga ontwerpen dan..</Prompt>
          <Body $mt={28}>Denk ik zo breed mogelijk en blijf ik brainstormen, er kunnen steeds nieuwe</Body>
          <Body>ideeën/ontwikkelingen ontstaan.</Body>
          <Prompt $mt={33}>Als ik een [eigenaar van een ‘<Misspelled>all-around</Misspelled>’ bedrijf’ ben ..</Prompt>
          <Body $mt={29}>Dan kan ik meerdere projecten oppakken die mij aanspreken, ik leer meer over meerdere</Body>
          <Body>onderwerpen en elke dag ziet er anders uit.</Body>
          <Prompt $mt={97}>Als ik een eigen internetbureau heb …</Prompt>
          <Body $mt={30}>Dan uit ik mijn werk/content op een creatieve en eigen manier, wat voor meer klanten</Body>
          <Body>zorgt.</Body>
          <Prompt $mt={89}>Als ik klaar ben met werken ga ik het liefst ..</Prompt>
          <Body $mt={28}>Ontspannen of juist op pad gaan en nieuwe dingen ontdekken/fotograferen.</Body>
          <Prompt $mt={91}>Ik luister het liefste naar POP, R&amp;B, hip-hop, latijn, <Misspelled>chille</Misspelled> en <Misspelled>old</Misspelled> school muziek omdat</Prompt>
          <Prompt>…</Prompt>
          <Body $mt={28}>Elk van deze genre iets voor mij doet. Of ik raak er enthousiast en vrolijk van, rustig en</Body>
          <Body>ontspannen. Vaak luister ik ook alles door elkaar. De ene keer luister ik naar een nummer</Body>
          <Body>van Drake en het volgende nummer is van Elvis Presley, dan Pink en daarna J <Misspelled>Balvin</Misspelled> en dan</Body>
          <Body>weer naar Lewis <Misspelled>Capaldi</Misspelled>.</Body>
        </Page>
      </Canvas>

      <StatusBar>
        <StatusText $l={48}>Pagina 1 van 2</StatusText>
        <StatusText $l={40}>462 woorden</StatusText>
        <Slot $l={41}><NoCheck /></Slot>
        <StatusText $l={45}>Engels (Verenigde Staten)</StatusText>
        <StatusRight>
          <FocusIcon />
          <StatusText $l={14}>Focus</StatusText>
          <ViewButton $l={22} $on><PrintView /></ViewButton>
          <ViewButton $l={19}><WebView /></ViewButton>
          <ViewButton $l={42}><OutlineView /></ViewButton>
          <ViewButton $l={42}><DraftView /></ViewButton>
          <Slot $l={39}><Minus /></Slot>
          <ZoomTrack><ZoomKnob /></ZoomTrack>
          <Slot $l={17}><Plus /></Slot>
          <StatusText $l={34}>100%</StatusText>
          <Slot $l={49} />
        </StatusRight>
      </StatusBar>
    </Window>
  );
}
